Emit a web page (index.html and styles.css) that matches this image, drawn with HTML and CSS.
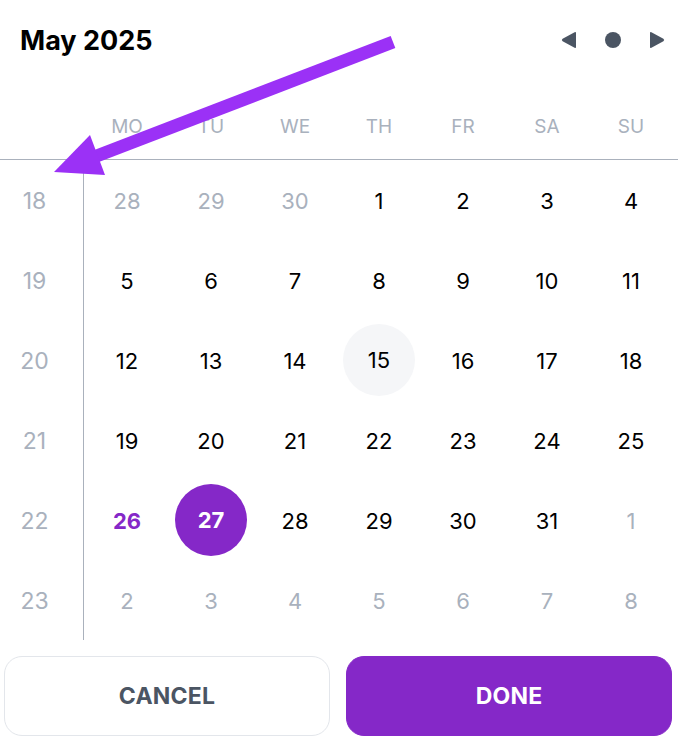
FILE: index.html
```html
<!DOCTYPE html>
<html>
  <head>
    <title>May 2025</title>
    <link rel="stylesheet" href="styles.css">
  </head>
  <body>
    <div class="picker">
      <div class="header">
        <div class="title">May 2025</div>
        <div class="nav">
          <svg class="nav-icon" width="16" height="18" viewBox="0 0 16 18"><path d="M15 2 L15 16 Q15 17.6 13.6 16.8 L1.6 10.2 Q0 9 1.6 7.8 L13.6 1.2 Q15 0.4 15 2 Z" fill="#4b5563"/></svg>
          <svg class="nav-icon" width="16" height="18" viewBox="0 0 16 18"><circle cx="8" cy="9" r="8" fill="#4b5563"/></svg>
          <svg class="nav-icon" width="16" height="18" viewBox="0 0 16 18"><path d="M1 2 L1 16 Q1 17.6 2.4 16.8 L14.4 10.2 Q16 9 14.4 7.8 L2.4 1.2 Q1 0.4 1 2 Z" fill="#4b5563"/></svg>
        </div>
      </div>

      <div class="weekdays">
        <div></div>
        <div>MO</div><div>TU</div><div>WE</div><div>TH</div><div>FR</div><div>SA</div><div>SU</div>
      </div>

      <div class="grid">
        <div class="week">18</div>
        <div class="day muted">28</div><div class="day muted">29</div><div class="day muted">30</div>
        <div class="day">1</div><div class="day">2</div><div class="day">3</div><div class="day">4</div>

        <div class="week">19</div>
        <div class="day">5</div><div class="day">6</div><div class="day">7</div><div class="day">8</div>
        <div class="day">9</div><div class="day">10</div><div class="day">11</div>

        <div class="week">20</div>
        <div class="day">12</div><div class="day">13</div><div class="day">14</div>
        <div class="day"><span class="today">15</span></div>
        <div class="day">16</div><div class="day">17</div><div class="day">18</div>

        <div class="week">21</div>
        <div class="day">19</div><div class="day">20</div><div class="day">21</div><div class="day">22</div>
        <div class="day">23</div><div class="day">24</div><div class="day">25</div>

        <div class="week">22</div>
        <div class="day current">26</div>
        <div class="day"><span class="selected">27</span></div>
        <div class="day">28</div><div class="day">29</div><div class="day">30</div><div class="day">31</div>
        <div class="day muted">1</div>

        <div class="week">23</div>
        <div class="day muted">2</div><div class="day muted">3</div><div class="day muted">4</div><div class="day muted">5</div>
        <div class="day muted">6</div><div class="day muted">7</div><div class="day muted">8</div>
      </div>

      <div class="actions">
        <button class="btn cancel">CANCEL</button>
        <button class="btn done">DONE</button>
      </div>

      <svg class="arrow" width="678" height="746" viewBox="0 0 678 746">
        <line x1="393" y1="42" x2="94" y2="157" stroke="#9b31f6" stroke-width="13"/>
        <polygon points="54,172 90,135 105,175" fill="#9b31f6"/>
      </svg>
    </div>
  </body>
</html>
```

FILE: styles.css
```css
body {
  margin: 0;
  background: #ffffff;
  font-family: "Inter", "Noto Sans", sans-serif;
}

.picker {
  position: relative;
  width: 678px;
  height: 746px;
  overflow: hidden;
}

.header {
  display: flex;
  align-items: center;
  justify-content: space-between;
  height: 80px;
  padding: 0 13px 0 20px;
  box-sizing: border-box;
}

.title {
  font-size: 27px;
  font-weight: 700;
  color: #000000;
  letter-spacing: 0;
}

.nav {
  display: flex;
  align-items: center;
  gap: 28px;
}

.nav-icon {
  display: block;
  flex: none;
}

.weekdays {
  display: grid;
  grid-template-columns: 85px repeat(7, 84px);
  padding: 35px 0 20px;
  border-bottom: 1px solid #aab1bc;
  font-size: 19px;
  line-height: 24px;
  color: #a9b1bd;
  text-align: center;
}

.grid {
  display: grid;
  grid-template-columns: 85px repeat(7, 84px);
  grid-auto-rows: 80px;
}

.week {
  display: flex;
  align-items: center;
  justify-content: center;
  padding: 2px 14px 0 0;
  border-right: 1px solid #aab1bc;
  margin-right: 1px;
  font-size: 23px;
  color: #a9b1bd;
}

.day {
  display: flex;
  align-items: center;
  justify-content: center;
  padding-top: 2px;
  font-size: 22px;
  color: #000000;
}

.day.muted {
  color: #a9b1bd;
}

.day.current {
  color: #8528c8;
  font-weight: 700;
}

.today,
.selected {
  display: flex;
  align-items: center;
  justify-content: center;
  width: 72px;
  height: 72px;
  margin-top: -2px;
  border-radius: 50%;
}

.today {
  background: #f5f6f8;
}

.selected {
  background: #8528c8;
  color: #ffffff;
  font-weight: 700;
}

.actions {
  display: flex;
  gap: 16px;
  padding: 16px 6px 0 4px;
}

.btn {
  flex: 1;
  height: 80px;
  border-radius: 18px;
  font-family: "Inter", "Noto Sans", sans-serif;
  font-size: 23px;
  font-weight: 700;
  letter-spacing: 0.2px;
}

.cancel {
  background: #ffffff;
  border: 1px solid #e3e6eb;
  color: #4b5563;
}

.done {
  background: #8528c8;
  border: 1px solid #8528c8;
  color: #ffffff;
}

.arrow {
  position: absolute;
  top: 0;
  left: 0;
  pointer-events: none;
}
```
